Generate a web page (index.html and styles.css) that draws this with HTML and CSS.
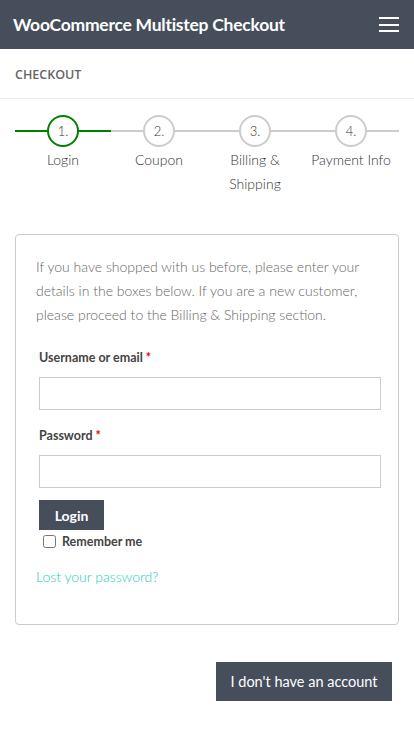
FILE: index.html
```html
<!DOCTYPE html>
<html lang="en">
<head>
<meta charset="utf-8">
<title>WooCommerce Multistep Checkout</title>
<link rel="stylesheet" href="styles.css">
</head>
<body>
<header class="topbar">
  <div class="site-title">WooCommerce Multistep Checkout</div>
  <button class="menu" aria-label="Menu">
    <span></span><span></span><span></span>
  </button>
</header>
<div class="page-title">CHECKOUT</div>
<main class="content">
  <ol class="steps">
    <li class="step active"><span class="dot">1.</span><span class="label">Login</span></li>
    <li class="step"><span class="dot">2.</span><span class="label">Coupon</span></li>
    <li class="step"><span class="dot">3.</span><span class="label">Billing &amp;<br>Shipping</span></li>
    <li class="step"><span class="dot">4.</span><span class="label">Payment Info</span></li>
  </ol>
  <section class="card">
    <p class="intro">If you have shopped with us before, please enter your details in the boxes below. If you are a new customer, please proceed to the Billing &amp; Shipping section.</p>
    <form class="login-form">
      <label class="field-label">Username or email <span class="req">*</span></label>
      <input class="field" type="text">
      <label class="field-label">Password <span class="req">*</span></label>
      <input class="field field-last" type="password">
      <button type="button" class="btn btn-login">Login</button>
      <label class="remember"><input type="checkbox" class="check"> Remember me</label>
    </form>
    <a class="lost" href="#">Lost your password?</a>
  </section>
  <div class="actions">
    <button type="button" class="btn btn-noaccount">I don't have an account</button>
  </div>
</main>
</body>
</html>
```
FILE: styles.css
```css
* { box-sizing: border-box; }
html, body { margin: 0; padding: 0; background: #fff; }
body { font-family: Lato, "Open Sans", sans-serif; color: #555; width: 414px; }

.topbar {
  height: 49px;
  background: #464e5c;
  display: flex;
  align-items: center;
  justify-content: space-between;
  padding: 0 15px 0 13px;
}
.site-title {
  color: #fff;
  font-weight: 700;
  font-size: 17.5px;
  letter-spacing: -0.25px;
}
.menu {
  width: 20px;
  height: 15px;
  padding: 0;
  border: 0;
  background: transparent;
  display: flex;
  flex-direction: column;
  justify-content: space-between;
}
.menu span { display: block; height: 2px; width: 20px; background: #fff; }

.page-title {
  height: 50px;
  border-bottom: 1px solid #eaeaea;
  padding: 17px 15px 0;
  font-family: "Open Sans", sans-serif;
  font-size: 12.5px;
  font-weight: 600;
  color: #666;
}

.content { padding: 16px 15px 0; }

.steps {
  list-style: none;
  margin: 0;
  padding: 0;
  display: grid;
  grid-template-columns: repeat(4, 1fr);
}
.step {
  position: relative;
  display: flex;
  flex-direction: column;
  align-items: center;
  text-align: center;
}
.step::before {
  content: "";
  position: absolute;
  left: 0; right: 0; top: 15px;
  height: 2px;
  background: #ccc;
}
.step.active::before { background: #008000; }
.dot {
  position: relative;
  width: 32px;
  height: 32px;
  border-radius: 50%;
  border: 2px solid #ccc;
  background: #fff;
  display: flex;
  align-items: center;
  justify-content: center;
  font-size: 13px;
  font-weight: 300;
  color: #333;
}
.step.active .dot { border-color: #008000; }
.label {
  margin-top: 1px;
  font-size: 14px;
  font-weight: 300;
  line-height: 24px;
  color: #333;
}

.card {
  margin-top: 38px;
  border: 1px solid #ccc;
  border-radius: 4px;
  padding: 20px 20px 0 20px;
  height: 391px;
}
.intro {
  margin: 0;
  font-size: 14px;
  font-weight: 300;
  line-height: 24px;
  color: #666;
}
.login-form {
  margin: 22px -3px 0 3px;
  display: flex;
  flex-direction: column;
  align-items: flex-start;
}
.field-label {
  font-size: 12.5px;
  font-weight: 700;
  color: #444;
  line-height: 18px;
}
.req { color: #e00; }
.field {
  width: 100%;
  height: 33px;
  margin: 10px 0 17px;
  border: 1px solid #ccc;
  border-radius: 0;
  background: #fff;
}
.field-last { margin-bottom: 12px; }
.btn {
  border: 0;
  border-radius: 0;
  background: #464e5c;
  color: #fff;
  font-family: Lato, sans-serif;
  font-weight: 700;
  font-size: 14px;
  cursor: pointer;
}
.btn-login { width: 65px; height: 30px; padding: 0; }
.remember {
  margin-top: 4px;
  display: flex;
  align-items: center;
  font-size: 12.5px;
  font-weight: 700;
  color: #444;
  gap: 6px;
  padding-left: 4px;
}
.check { margin: 0; width: 13px; height: 13px; }
.lost {
  display: inline-block;
  margin-top: 19px;
  font-size: 14px;
  font-weight: 300;
  color: #22cdb9;
  text-decoration: none;
}

.actions {
  margin-top: 37px;
  display: flex;
  justify-content: flex-end;
  padding-right: 7px;
}
.btn-noaccount { width: 176px; height: 39px; padding: 0; font-weight: 400; font-size: 14.5px; }
```
